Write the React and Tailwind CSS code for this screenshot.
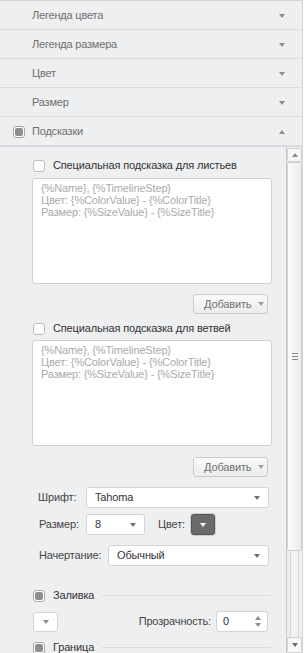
import React from 'react';

const font = { fontFamily: '"Liberation Sans", Arial, sans-serif' };

function Caret({ up = false, color = 'border-t-[#8c8c8c]' }) {
  if (up) {
    return <span className="inline-block w-0 h-0 border-x-[3px] border-x-transparent border-b-[4px] border-b-[#8c8c8c]" />;
  }
  return <span className={`inline-block w-0 h-0 border-x-[3px] border-x-transparent border-t-[4px] ${color}`} />;
}

function GrayCheck() {
  return (
    <span className="flex items-center justify-center w-[12px] h-[12px] rounded-[3px] border border-[#a8a8a8] bg-white">
      <span className="block w-[8px] h-[8px] rounded-[2px] bg-[#8e8e8e]" />
    </span>
  );
}

function EmptyCheck() {
  return <span className="block w-[12px] h-[12px] rounded-[3px] border border-[#bdbdbd] bg-white" />;
}

function Section({ title, checked, open }) {
  return (
    <div className="flex items-center h-[29px] border-b border-[#dcdde0] pl-[13px] pr-[17px] pt-[1px]">
      <div className="w-[19px]">{checked && <GrayCheck />}</div>
      <span className="flex-1 text-[11px] tracking-[-0.2px] text-[#6e6e6e]">{title}</span>
      <Caret up={open} />
    </div>
  );
}

function TemplateBox() {
  return (
    <div className="ml-[32px] w-[240px] h-[106px] bg-white border border-[#cfd0d3] rounded-[3px] px-[8px] pt-[3px] text-[11px] leading-[12px] tracking-[-0.15px] text-[#aaaaaa]">
      <div>{'{%Name}, {%TimelineStep}'}</div>
      <div>{'Цвет: {%ColorValue} - {%ColorTitle}'}</div>
      <div>{'Размер: {%SizeValue} - {%SizeTitle}'}</div>
    </div>
  );
}

function AddButton() {
  return (
    <div className="flex justify-end pr-[18px]">
      <div className="flex items-center gap-[7px] h-[20px] w-[75px] pl-[10px] bg-gradient-to-b from-[#fafafa] to-[#ececec] border border-[#c9cacd] rounded-[3px] text-[11px] text-[#707070]">
        Добавить
        <Caret color="border-t-[#a0a0a0]" />
      </div>
    </div>
  );
}

function Select({ value, w }) {
  return (
    <div className={`flex items-center justify-between h-[21px] ${w} bg-white border border-[#d2d3d6] rounded-[3px] pl-[8px] pr-[8px] text-[11px] text-[#333]`}>
      <span>{value}</span>
      <Caret color="border-t-[#707070]" />
    </div>
  );
}

export default function App() {
  return (
    <div className="w-[305px] h-[653px] bg-white overflow-hidden" style={font}>
      <div className="w-[303px] h-[653px] bg-[#eeeff1] border-t border-r border-[#d4d5d8] flex flex-col">
        <Section title="Легенда цвета" />
        <Section title="Легенда размера" />
        <Section title="Цвет" />
        <Section title="Размер" />
        <Section title="Подсказки" checked open />

        <div className="flex flex-1 min-h-0 border-t border-[#d3d4d7]">
          <div className="flex-1 overflow-hidden text-[11px] tracking-[-0.15px] text-[#333]">
            <div className="flex items-center gap-[8px] pl-[33px] mt-[12px] h-[13px]">
              <EmptyCheck />
              <span>Специальная подсказка для листьев</span>
            </div>
            <div className="mt-[6px]"><TemplateBox /></div>
            <div className="mt-[10px]"><AddButton /></div>

            <div className="flex items-center gap-[8px] pl-[33px] mt-[8px] h-[13px]">
              <EmptyCheck />
              <span>Специальная подсказка для ветвей</span>
            </div>
            <div className="mt-[5px]"><TemplateBox /></div>
            <div className="mt-[11px]"><AddButton /></div>

            <div className="flex items-center mt-[10px] pl-[38px]">
              <span className="w-[48px] text-[#444]">Шрифт:</span>
              <Select value="Tahoma" w="w-[183px]" />
            </div>
            <div className="flex items-center mt-[6px] pl-[39px]">
              <span className="w-[47px] text-[#444]">Размер:</span>
              <Select value="8" w="w-[59px]" />
              <span className="ml-[13px] w-[33px] text-[#444]">Цвет:</span>
              <div className="flex items-center justify-center w-[24px] h-[21px] rounded-[3px] bg-[#6a6a6a] border border-[#555] shadow-[0_0_0_1px_#cfcfcf]">
                <Caret color="border-t-white" />
              </div>
            </div>
            <div className="flex items-center mt-[10px] pl-[39px]">
              <span className="w-[69px] text-[#444]">Начертание:</span>
              <Select value="Обычный" w="w-[161px]" />
            </div>

            <div className="flex items-center gap-[8px] pl-[33px] mt-[23px] pr-[15px] h-[13px]">
              <GrayCheck />
              <span>Заливка</span>
              <span className="flex-1 h-px bg-[#dcdde0]" />
            </div>
            <div className="flex items-center mt-[9px] pl-[33px] pr-[18px]">
              <div className="flex items-center justify-center w-[25px] h-[20px] bg-white border border-[#d2d3d6] rounded-[3px]">
                <Caret color="border-t-[#8c8c8c]" />
              </div>
              <span className="ml-auto mr-[5px] text-[#444]">Прозрачность:</span>
              <div className="flex items-center justify-between w-[52px] h-[21px] bg-white border border-[#d2d3d6] rounded-[3px] pl-[6px] pr-[6px]">
                <span>0</span>
                <span className="flex flex-col gap-[3px]">
                  <Caret up />
                  <Caret color="border-t-[#8c8c8c]" />
                </span>
              </div>
            </div>
            <div className="flex items-center gap-[8px] pl-[33px] mt-[9px] pr-[15px] h-[13px]">
              <GrayCheck />
              <span>Граница</span>
              <span className="flex-1 h-px bg-[#dcdde0]" />
            </div>
          </div>

          <div className="w-[16px] flex flex-col border-l border-[#c9cacd] bg-[#eeeff1] pt-[1px]">
            <div className="flex items-center justify-center h-[14px] border border-[#d0d1d4] bg-[#f7f7f7] rounded-[2px]">
              <Caret up />
            </div>
            <div className="flex items-center justify-center h-[389px] border border-[#cfd0d3] rounded-[3px] bg-gradient-to-r from-[#fbfbfb] to-[#ececec]">
              <div className="flex flex-col gap-[2px]">
                <span className="block w-[6px] h-px bg-[#8a8a8a]" />
                <span className="block w-[6px] h-px bg-[#8a8a8a]" />
                <span className="block w-[6px] h-px bg-[#8a8a8a]" />
              </div>
            </div>
            <div className="flex-1 mx-[3px] border-x border-[#d6d7da] bg-[#f3f3f4]" />
            <div className="flex items-center justify-center h-[16px] border border-[#d0d1d4] bg-[#f7f7f7] rounded-[2px]">
              <Caret color="border-t-[#6e6e6e]" />
            </div>
          </div>
        </div>
      </div>
    </div>
  );
}
